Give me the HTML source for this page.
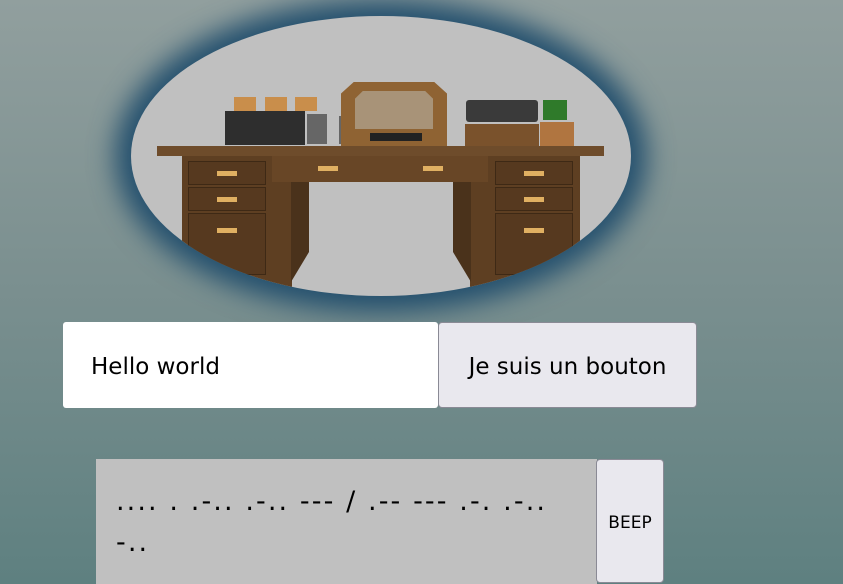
<!DOCTYPE html><html style="overflow:hidden"><head><style>
body{margin:0;width:843px;height:584px;overflow:hidden;background:linear-gradient(180deg,#919f9e 0%,#7a8f8f 50%,#5e8080 100%);font-family:"DejaVu Sans","Liberation Sans",sans-serif;position:relative}
.a{position:absolute}
.ell{left:131px;top:16px;width:500px;height:280px;border-radius:50%;background:#c0c0c0;box-shadow:0 0 26px 16px #24506e;overflow:hidden}
.dr{position:absolute;background:#56391f;border:1px solid #3e2915}
.h{position:absolute;width:20px;height:5px;background:#e0b062}
</style></head><body>
<div class="a ell">
 <div class="a" style="left:26px;top:130px;width:447px;height:10px;background:#6e4c2b"></div>
 <div class="a" style="left:51px;top:140px;width:110px;height:140px;background:#5e3f22"></div>
 <div class="a" style="left:339px;top:140px;width:110px;height:140px;background:#5e3f22"></div>
 <div class="a" style="left:141px;top:140px;width:216px;height:26px;background:#684626"></div>
 <div class="a" style="left:160px;top:166px;width:18px;height:100px;background:#4a321b;clip-path:polygon(0 0,100% 0,100% 70%,0 100%)"></div>
 <div class="a" style="left:322px;top:166px;width:18px;height:100px;background:#4a321b;clip-path:polygon(0 0,100% 0,100% 100%,0 70%)"></div>
 <div class="dr" style="left:57px;top:145px;width:76px;height:22px"></div>
 <div class="dr" style="left:57px;top:171px;width:76px;height:22px"></div>
 <div class="dr" style="left:57px;top:197px;width:76px;height:60px"></div>
 <div class="dr" style="left:364px;top:145px;width:76px;height:22px"></div>
 <div class="dr" style="left:364px;top:171px;width:76px;height:22px"></div>
 <div class="dr" style="left:364px;top:197px;width:76px;height:60px"></div>
 <div class="h" style="left:86px;top:155px"></div><div class="h" style="left:86px;top:181px"></div><div class="h" style="left:86px;top:212px"></div>
 <div class="h" style="left:393px;top:155px"></div><div class="h" style="left:393px;top:181px"></div><div class="h" style="left:393px;top:212px"></div>
 <div class="h" style="left:187px;top:150px"></div><div class="h" style="left:292px;top:150px"></div>
 <div class="a" style="left:94px;top:95px;width:80px;height:34px;background:#2e2e2e"></div>
 <div class="a" style="left:103px;top:81px;width:22px;height:14px;background:#c98e4b"></div>
 <div class="a" style="left:134px;top:81px;width:22px;height:14px;background:#c98e4b"></div>
 <div class="a" style="left:164px;top:81px;width:22px;height:14px;background:#c98e4b"></div>
 <div class="a" style="left:176px;top:98px;width:20px;height:30px;background:#666"></div>
 <div class="a" style="left:208px;top:100px;width:20px;height:28px;background:#666"></div>
 <div class="a" style="left:210px;top:66px;width:106px;height:64px;background:#8f6333;clip-path:polygon(12% 0,88% 0,100% 18%,100% 100%,0 100%,0 18%)"></div>
 <div class="a" style="left:224px;top:75px;width:78px;height:38px;background:#a89378;clip-path:polygon(10% 0,90% 0,100% 20%,100% 100%,0 100%,0 20%)"></div>
 <div class="a" style="left:239px;top:117px;width:52px;height:8px;background:#222"></div>
 <div class="a" style="left:335px;top:84px;width:72px;height:22px;background:#3a3a3a;border-radius:3px"></div>
 <div class="a" style="left:334px;top:108px;width:74px;height:22px;background:#7a522c"></div>
 <div class="a" style="left:412px;top:84px;width:24px;height:20px;background:#2f7a2a"></div>
 <div class="a" style="left:409px;top:106px;width:34px;height:24px;background:#b07540"></div>
</div>
<div class="a" style="left:63px;top:322px;width:375px;height:86px;background:#fff;border-radius:3px;font-size:23px;line-height:90px;box-sizing:border-box;padding-left:28px">Hello world</div>
<div class="a" style="left:438px;top:322px;width:259px;height:86px;background:#e9e8ee;border:1px solid #8a8a95;border-radius:4px;box-sizing:border-box;font-size:23px;line-height:88px;text-align:center">Je suis un bouton</div>
<div class="a" style="left:96px;top:459px;width:501px;height:125px;background:#c0c0c0;box-sizing:border-box;padding:22px 0 0 20px;font-size:27px;line-height:41px;letter-spacing:2.1px;white-space:nowrap;overflow:hidden">.... . .-.. .-.. --- / .-- --- .-. .-..<br>-..</div>
<div class="a" style="left:596px;top:459px;width:68px;height:124px;background:#e9e8ee;border:1px solid #8a8a95;border-radius:4px;box-sizing:border-box;font-size:17px;line-height:126px;text-align:center">BEEP</div>
</body></html>
